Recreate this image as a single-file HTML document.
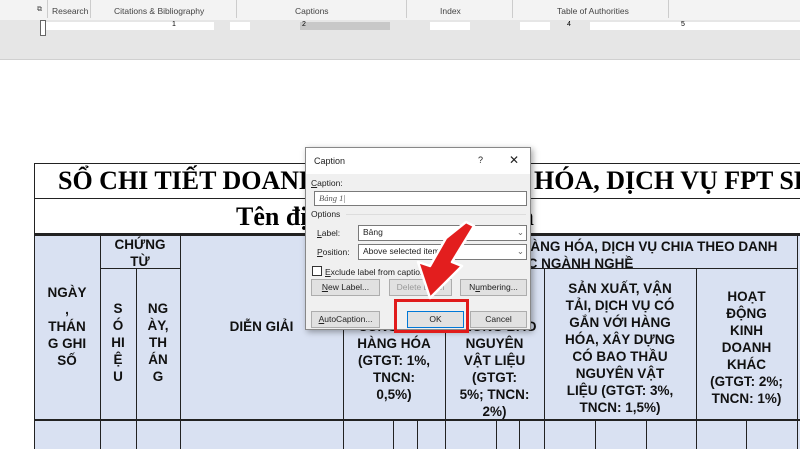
<!DOCTYPE html>
<html><head><meta charset="utf-8"><style>
*{margin:0;padding:0;box-sizing:border-box}
body{width:800px;height:449px;overflow:hidden;background:#fff;position:relative;font-family:"Liberation Sans",sans-serif}
.a{position:absolute}
.rib{left:0;top:0;width:800px;height:20px;background:#f3f3f3;font-size:8.5px;color:#444}
.rib span{position:absolute;top:6px}
.sep{position:absolute;top:0;width:1px;height:18px;background:#ccc}
.ruler{left:0;top:20px;width:800px;height:40px;background:#e6e6e6;border-bottom:1px solid #d0d0d0}
.rl{position:absolute;top:2px;height:8px;background:#fff}
.tb{font-family:"Liberation Serif",serif;font-weight:bold;color:#000}
.hd{background:#d9e1f2}
.ln{position:absolute;background:#222}
.ht{position:absolute;font-weight:bold;font-size:13.5px;text-align:center;line-height:17px;color:#111;white-space:nowrap}
.dlg{left:305px;top:147px;width:226px;height:183px;background:#f0f0f0;border:1px solid #888;box-shadow:2px 2px 6px rgba(0,0,0,.35);font-size:8.5px;color:#222}
.btn{position:absolute;height:17px;background:#e1e1e1;border:1px solid #adadad;text-align:center;line-height:15px;font-size:8.5px}
.inp{position:absolute;background:#fff;border:1px solid #7a7a7a;height:15px;line-height:13px;padding-left:4px}
</style></head><body>
<div class="a rib">
<span style="left:37px;font-size:7px">⧉</span><div class="sep" style="left:47px"></div>
<span style="left:52px">Research</span><div class="sep" style="left:90px"></div>
<span style="left:114px">Citations &amp; Bibliography</span><div class="sep" style="left:236px"></div>
<span style="left:295px">Captions</span><div class="sep" style="left:406px"></div>
<span style="left:440px">Index</span><div class="sep" style="left:512px"></div>
<span style="left:557px">Table of Authorities</span><div class="sep" style="left:668px"></div>
</div>
<div class="a ruler">
<div class="rl" style="left:44px;width:170px"></div>
<div class="rl" style="left:230px;width:20px"></div>
<div class="rl" style="left:300px;width:90px;background:#c8c8c8"></div>
<div class="rl" style="left:430px;width:40px"></div>
<div class="rl" style="left:520px;width:30px"></div>
<div class="rl" style="left:590px;width:210px"></div>
<span class="a" style="left:172px;top:1px;font-size:7px">1</span>
<span class="a" style="left:302px;top:1px;font-size:7px">2</span>
<span class="a" style="left:567px;top:1px;font-size:7px">4</span>
<span class="a" style="left:681px;top:1px;font-size:7px">5</span>
<div class="a" style="left:40px;top:0;width:6px;height:16px;border:1px solid #666;background:#fff"></div>
</div>
<!-- table -->
<div class="a" style="left:34px;top:163px;width:770px;height:71px;border:1px solid #222;border-right:none"></div>
<div class="ln" style="left:34px;top:198px;width:766px;height:1px"></div>
<div class="a tb" style="left:58px;top:166px;font-size:26px;white-space:nowrap">SỔ CHI TIẾT DOANH THU BÁN HÀNG HÓA, DỊCH VỤ FPT SH</div>
<div class="a tb" style="left:236px;top:202px;font-size:26px;white-space:nowrap">Tên địa điểm: 216 Thái Hà</div>
<div class="a hd" style="left:34px;top:234px;width:766px;height:215px"></div>
<div class="ln" style="left:34px;top:234px;width:766px;height:2px"></div>
<div class="ln" style="left:34px;top:234px;width:1px;height:215px"></div>
<div class="ln" style="left:100px;top:234px;width:1px;height:215px"></div>
<div class="ln" style="left:180px;top:234px;width:1px;height:215px"></div>
<div class="ln" style="left:136px;top:268px;width:1px;height:181px"></div>
<div class="ln" style="left:343px;top:234px;width:1px;height:215px"></div>
<div class="ln" style="left:445px;top:268px;width:1px;height:181px"></div>
<div class="ln" style="left:544px;top:268px;width:1px;height:181px"></div>
<div class="ln" style="left:696px;top:268px;width:1px;height:181px"></div>
<div class="ln" style="left:797px;top:234px;width:1px;height:215px"></div>
<div class="ln" style="left:100px;top:268px;width:80px;height:1px"></div>
<div class="ln" style="left:343px;top:268px;width:454px;height:1px"></div>
<div class="ln" style="left:34px;top:419px;width:766px;height:2px"></div>
<div class="ln" style="left:393px;top:420px;width:1px;height:29px"></div>
<div class="ln" style="left:417px;top:420px;width:1px;height:29px"></div>
<div class="ln" style="left:496px;top:420px;width:1px;height:29px"></div>
<div class="ln" style="left:519px;top:420px;width:1px;height:29px"></div>
<div class="ln" style="left:595px;top:420px;width:1px;height:29px"></div>
<div class="ln" style="left:646px;top:420px;width:1px;height:29px"></div>
<div class="ln" style="left:746px;top:420px;width:1px;height:29px"></div>
<div class="ht" style="left:34px;top:284px;width:66px">NGÀY<br>,<br>THÁN<br>G GHI<br>SỐ</div>
<div class="ht" style="left:100px;top:236px;width:80px">CHỨNG<br>TỪ</div>
<div class="ht" style="left:100px;top:300px;width:36px">S<br>Ó<br>HI<br>Ệ<br>U</div>
<div class="ht" style="left:136px;top:300px;width:44px">NG<br>ÀY,<br>TH<br>ÁN<br>G</div>
<div class="ht" style="left:180px;top:318px;width:163px">DIỄN GIẢI</div>
<div class="ht" style="left:343px;top:238px;width:454px">PHÂN PHỐI, CUNG CẤP HÀNG HÓA, DỊCH VỤ CHIA THEO DANH<br>MỤC NGÀNH NGHỀ</div>
<div class="ht" style="left:343px;top:318px;width:102px">CUNG CẤP<br>HÀNG HÓA<br>(GTGT: 1%,<br>TNCN:<br>0,5%)</div>
<div class="ht" style="left:445px;top:301px;width:99px">DỊCH VỤ<br>KHÔNG BAO<br>NGUYÊN<br>VẬT LIỆU<br>(GTGT:<br>5%; TNCN:<br>2%)</div>
<div class="ht" style="left:544px;top:280px;width:152px">SẢN XUẤT, VẬN<br>TẢI, DỊCH VỤ CÓ<br>GẮN VỚI HÀNG<br>HÓA, XÂY DỰNG<br>CÓ BAO THẦU<br>NGUYÊN VẬT<br>LIỆU (GTGT: 3%,<br>TNCN: 1,5%)</div>
<div class="ht" style="left:696px;top:288px;width:101px">HOẠT<br>ĐỘNG<br>KINH<br>DOANH<br>KHÁC<br>(GTGT: 2%;<br>TNCN: 1%)</div>
<!-- dialog -->
<div class="a dlg">
<div class="a" style="left:0;top:0;width:224px;height:26px;background:#fff"></div>
<span class="a" style="left:8px;top:8px;font-size:9px">Caption</span>
<span class="a" style="left:172px;top:7px;font-size:9px">?</span>
<span class="a" style="left:203px;top:5px;font-size:12px">✕</span>
<span class="a" style="left:5px;top:30px"><u>C</u>aption:</span>
<div class="inp" style="left:8px;top:43px;width:213px;font-family:'Liberation Serif',serif;font-style:italic;color:#555">Bảng 1|</div>
<span class="a" style="left:5px;top:61px">Options</span>
<div class="a" style="left:40px;top:66px;width:180px;height:1px;background:#ddd"></div>
<span class="a" style="left:11px;top:80px"><u>L</u>abel:</span>
<div class="inp" style="left:52px;top:77px;width:169px;height:16px">Bảng<span style="position:absolute;right:2px;color:#666">⌄</span></div>
<span class="a" style="left:11px;top:99px"><u>P</u>osition:</span>
<div class="inp" style="left:52px;top:96px;width:169px;height:16px">Above selected item<span style="position:absolute;right:2px;color:#666">⌄</span></div>
<div class="a" style="left:6px;top:118px;width:10px;height:10px;border:1px solid #333;background:#fff"></div>
<span class="a" style="left:19px;top:119px"><u>E</u>xclude label from caption</span>
<div class="btn" style="left:5px;top:131px;width:69px"><u>N</u>ew Label...</div>
<div class="btn" style="left:83px;top:131px;width:63px;color:#999">Delete Label</div>
<div class="btn" style="left:154px;top:131px;width:67px">N<u>u</u>mbering...</div>
<div class="btn" style="left:5px;top:163px;width:69px"><u>A</u>utoCaption...</div>
<div class="btn" style="left:101px;top:163px;width:57px;border:1px solid #0078d7">OK</div>
<div class="btn" style="left:164px;top:163px;width:57px">Cancel</div>
</div>
<div class="a" style="left:394px;top:299px;width:75px;height:34px;border:3px solid #e01b1b"></div>
<svg class="a" style="left:400px;top:210px" width="90" height="100" viewBox="0 0 90 100">
<polygon points="66,12 74,16 52,52 62,56 30,88 18,52 30,56 46,28" fill="#e31e1e" stroke="#fff" stroke-width="2.5" stroke-linejoin="round"/>
</svg>
</body></html>
